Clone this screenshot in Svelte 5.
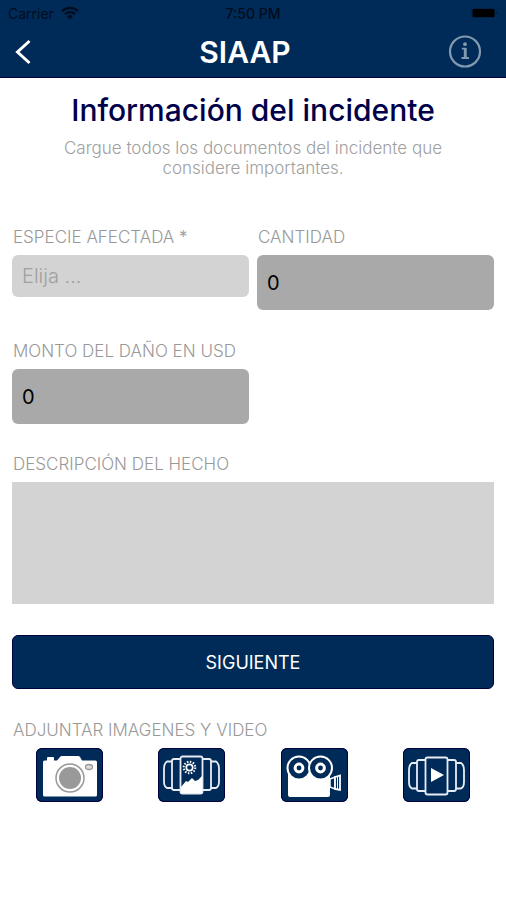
<script lang="ts">
  let especie = $state('');
  let cantidad = $state('0');
  let monto = $state('0');
  let descripcion = $state('');
</script>

<div class="screen">
  <header class="header">
    <div class="status-bar">
      <div class="carrier">
        <span>Carrier</span>
        <svg width="18" height="14" viewBox="0 0 18 14" aria-hidden="true">
          <path d="M1 5.2a11.4 11.4 0 0 1 16 0M4 8.1a7.2 7.2 0 0 1 10 0" fill="none" stroke="#000d1c" stroke-width="2.3" />
          <path d="M9 13.4 6.2 10.4a4 4 0 0 1 5.6 0z" fill="#000d1c" />
        </svg>
      </div>
      <span class="time">7:50 PM</span>
      <svg class="battery" width="27" height="10" viewBox="0 0 27 10" aria-hidden="true">
        <rect x="0.5" y="0.5" width="23" height="9" rx="2" fill="none" stroke="#00234a" />
        <rect x="1.5" y="1" width="22" height="8" rx="1" fill="#000" />
        <path d="M25 3.5v3l1.5-1.5z" fill="#001a38" />
      </svg>
    </div>
    <div class="nav-bar">
      <button class="nav-button" type="button" aria-label="Volver">
        <svg width="34" height="34" viewBox="0 0 34 34">
          <path d="M21.5 6 9.5 17l12 11" fill="none" stroke="#fff" stroke-width="3" />
        </svg>
      </button>
      <h1>SIAAP</h1>
      <button class="nav-button" type="button" aria-label="Ayuda">
        <svg width="34" height="34" viewBox="0 0 34 34">
          <circle cx="17" cy="16.5" r="15" fill="none" stroke="#8299b0" stroke-width="2.2" />
          <circle cx="17" cy="9.2" r="1.9" fill="#8299b0" />
          <path d="M13.8 13.6h3.6v9.2M13.5 23h7.500" fill="none" stroke="#8299b0" stroke-width="1.8" />
          <path d="M17.200 13v10" stroke="#8299b0" stroke-width="2.8" />
        </svg>
      </button>
    </div>
  </header>

  <main>
    <h2>Información del incidente</h2>
    <p class="intro">Cargue todos los documentos del incidente que considere importantes.</p>

    <form>
      <div class="fields">
        <div class="field">
          <label for="especie">ESPECIE AFECTADA *</label>
          <select id="especie" bind:value={especie}>
            <option value="">Elija ...</option>
          </select>
        </div>
        <div class="field">
          <label for="cantidad">CANTIDAD</label>
          <input id="cantidad" type="text" inputmode="numeric" bind:value={cantidad} />
        </div>
        <div class="field">
          <label for="monto">MONTO DEL DAÑO EN USD</label>
          <input id="monto" type="text" inputmode="decimal" bind:value={monto} />
        </div>
      </div>

      <div class="field">
        <label for="descripcion">DESCRIPCIÓN DEL HECHO</label>
        <textarea id="descripcion" bind:value={descripcion}></textarea>
      </div>

      <button class="submit" type="button">SIGUIENTE</button>
    </form>

    <h3>ADJUNTAR IMAGENES Y VIDEO</h3>
    <div class="attachments">
      <button class="attach" type="button" aria-label="Tomar foto">
        <svg viewBox="0 0 67 54">
          <path d="M7 14q0-1.500 1.500-1.500H11V10q0-1 1-1h5q1 0 1 1v2.500h3L24 9q.6-1 2-1h16q1.400 0 2 1l2 3.500h13.500q1.500 0 1.500 1.500v33q0 1.500-1.500 1.500h-51Q7 48.500 7 47z" fill="#fff" />
          <circle cx="34" cy="30" r="14" fill="#fff" stroke="#999" stroke-width="1.500" />
          <circle cx="34" cy="30" r="11" fill="#999" />
          <ellipse cx="53" cy="19" rx="3.500" ry="2.500" fill="#ddd" stroke="#999" stroke-width="1.300" />
        </svg>
      </button>

      <button class="attach" type="button" aria-label="Elegir imagen">
        <svg viewBox="0 0 67 54">
          <g fill="none" stroke="#e8edf5" stroke-width="1.800">
            <rect x="22.500" y="8.500" width="22" height="37" rx="2" />
            <path d="M22.500 11H16q-2 0-2 2v27q0 2 2 2h6.500M44.500 11H51q2 0 2 2v27q0 2-2 2h-6.500" />
            <path d="M14 13.500H9q-3 2-3 7v13q0 5 3 6.500h5M53 13.500h5q3 2 3 7v13q0 5-3 6.500h-5" />
          </g>
          <circle cx="31.500" cy="19.500" r="3.200" fill="#002b58" stroke="#fff" stroke-width="1.700" />
          <circle cx="31.500" cy="19.500" r="5.800" fill="none" stroke="#fff" stroke-width="2" stroke-dasharray="1.500 1.500" />
          <path d="M23 39l5-6 2 1 4-4 3 3 3-1 4-4v17H23z" fill="#fff" />
        </svg>
      </button>

      <button class="attach" type="button" aria-label="Grabar video">
        <svg viewBox="0 0 67 54">
          <path d="M7 22h42v25q0 2-2 2H9q-2 0-2-2z" fill="#fff" />
          <circle cx="18" cy="20" r="11.500" fill="#002b58" stroke="#fff" stroke-width="2" />
          <circle cx="39.500" cy="20" r="11.500" fill="#002b58" stroke="#fff" stroke-width="2" />
          <circle cx="18" cy="20" r="3.900" fill="#002b58" stroke="#fff" stroke-width="3" />
          <circle cx="39.500" cy="20" r="3.900" fill="#002b58" stroke="#fff" stroke-width="3" />
          <path d="M49 31l5-2v12l-5-2z" fill="#002b58" stroke="#fff" stroke-width="1.500" />
          <path d="M54 29l5-1.500v14.500L54 41z" fill="#002b58" stroke="#fff" stroke-width="1.800" />
          <path d="M56.500 29v12" stroke="#fff" />
        </svg>
      </button>

      <button class="attach" type="button" aria-label="Elegir video">
        <svg viewBox="0 0 67 54">
          <g fill="none" stroke="#e8edf5" stroke-width="1.800">
            <rect x="22.500" y="9.500" width="22" height="37" rx="2" />
            <path d="M22.500 12H16q-2 0-2 2v27q0 2 2 2h6.500M44.500 12H51q2 0 2 2v27q0 2-2 2h-6.500" />
            <path d="M14 15H9q-3 2-3 7v12q0 5 3 6.500h5M53 15h5q3 2 3 7v12q0 5-3 6.500h-5" />
          </g>
          <path d="M28 20l13 7-13 7z" fill="#fff" />
        </svg>
      </button>
    </div>
  </main>
</div>

<style>
  :global(body) {
    margin: 0;
    background: #fff;
  }

  .screen {
    font-family: Inter, 'Liberation Sans', sans-serif;
    color: #a0a0a0;
  }

  .header {
    background: #002b58;
    border-bottom: 1px solid #00003f;
  }

  .status-bar {
    display: grid;
    grid-template-columns: 1fr auto 1fr;
    align-items: center;
    height: 26px;
    padding: 0 8px;
    font-size: 14px;
    color: #000d1c;
  }

  .carrier {
    display: flex;
    align-items: center;
    gap: 7px;
  }

  .time {
    font-weight: 500;
  }

  .battery {
    justify-self: end;
  }

  .nav-bar {
    display: flex;
    align-items: center;
    justify-content: space-between;
    height: 51px;
    padding: 0 24px 0 8px;
  }

  .nav-button {
    padding: 0;
    border: 0;
    background: none;
  }

  .nav-button svg {
    display: block;
  }

  h1 {
    margin: 0;
    font-size: 30px;
    font-weight: 600;
    color: #fff;
  }

  main {
    padding: 12px 12px 24px;
  }

  h2 {
    margin: 0;
    font-size: 30px;
    line-height: 40px;
    font-weight: 500;
    text-align: center;
    color: #00004a;
  }

  .intro {
    max-width: 400px;
    margin: 8px auto 49px;
    font-size: 17px;
    line-height: 20px;
    font-weight: 300;
    text-align: center;
  }

  .fields {
    display: grid;
    grid-template-columns: 1fr 1fr;
    gap: 31px 8px;
    align-items: start;
    margin-bottom: 30px;
  }

  .field {
    display: flex;
    flex-direction: column;
    gap: 7px;
  }

  label,
  h3 {
    margin: 0;
    padding-left: 1px;
    font-size: 17px;
    line-height: 21px;
    font-weight: 300;
    color: #999;
  }

  select,
  input,
  textarea {
    box-sizing: border-box;
    width: 100%;
    margin: 0;
    padding: 0 10px;
    border: 0;
    border-radius: 6px;
    font-family: inherit;
    font-size: 20px;
  }

  select {
    appearance: none;
    height: 42px;
    background: #d3d3d3;
    color: #a0a0a0;
    font-weight: 300;
  }

  input {
    height: 55px;
    background: #a9a9a9;
    color: #000;
  }

  textarea {
    display: block;
    height: 122px;
    border-radius: 0;
    background: #d3d3d3;
    color: #000;
    resize: none;
  }

  .submit {
    display: block;
    width: 100%;
    height: 54px;
    margin: 31px 0;
    border: 1px solid #00003f;
    border-radius: 6px;
    background: #002b58;
    font-family: inherit;
    font-size: 18px;
    font-weight: 400;
    color: #fff;
  }

  .attachments {
    display: flex;
    justify-content: space-around;
    margin: 7px -4px 0;
  }

  .attach {
    width: 67px;
    height: 54px;
    padding: 0;
    border: 0;
    border-radius: 6px;
    background: #002b58;
    box-shadow: inset 0 0 0 1px #00003f;
  }

  .attach svg {
    display: block;
    width: 100%;
  }
</style>
